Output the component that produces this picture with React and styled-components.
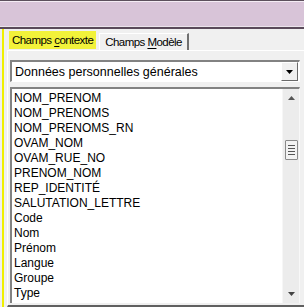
import styled, { createGlobalStyle } from "styled-components";

const Global = createGlobalStyle`
  html, body {
    margin: 0;
    padding: 0;
    background: #f0f0f0;
    overflow: hidden;
  }
  body {
    font-family: "Liberation Sans", Arial, sans-serif;
    font-size: 12px;
    color: #000;
  }
`;

const Window = styled.div`
  width: 304px;
  height: 307px;
  display: flex;
  flex-direction: column;
`;

const TitleBar = styled.div`
  height: 26px;
  flex: none;
  background: #d8c4d8;
  border-top: 1px solid #5c505c;
  box-shadow: inset 0 1px 0 #f4ecf4, inset 0 -1px 0 #ece4ec;
  border-bottom: 2px solid #5a4a5a;
`;

const Body = styled.div`
  flex: 1;
  display: flex;
  min-height: 0;
`;

const Marker = styled.div`
  width: 2px;
  margin-left: 2px;
  background: #f0f000;
  flex: none;
`;

const Pane = styled.div`
  flex: 1;
  display: flex;
  flex-direction: column;
  padding-left: 3px;
  padding-top: 2px;
  min-width: 0;
`;

const TabRow = styled.div`
  display: flex;
  align-items: flex-end;
  height: 19px;
  padding-left: 1px;
  flex: none;
`;

const Tab = styled.div`
  height: ${p => (p.$active ? "18px" : "17px")};
  padding: 0 ${p => (p.$active ? "3px" : "5px")};
  margin-left: ${p => (p.$active ? "1px" : "3px")};
  margin-bottom: ${p => (p.$active ? "1px" : "0")};
  display: flex;
  align-items: center;
  white-space: nowrap;
  font-size: 11.5px;
  letter-spacing: -0.55px;
  background: ${p => (p.$active ? "#f2f23a" : "#f0f0f0")};
  border-left: ${p => (p.$active ? "none" : "1px solid #fff")};
  border-top: ${p => (p.$active ? "none" : "1px solid #fff")};
  border-right: ${p => (p.$active ? "none" : "2px solid #707070")};
  box-sizing: border-box;
  u {
    text-decoration: underline;
    text-underline-offset: 2px;
  }
`;

const Panel = styled.div`
  flex: 1;
  border-top: 1px solid #fff;
  border-left: 1px solid #fff;
  border-bottom: 2px solid #606060;
  display: flex;
  flex-direction: column;
  gap: 5px;
  padding: 9px 0 2px 2px;
  min-height: 0;
`;

const Select = styled.div`
  height: 22px;
  flex: none;
  margin-right: 4px;
  display: flex;
  align-items: center;
  background: #fff;
  box-sizing: border-box;
  border-top: 2px solid #828282;
  border-left: 2px solid #828282;
  border-right: 1px solid #fff;
  border-bottom: 1px solid #fff;
`;

const SelectText = styled.div`
  flex: 1;
  padding-left: 3px;
  font-size: 12.5px;
`;

const DropButton = styled.div`
  width: 15px;
  height: 17px;
  margin-right: 1px;
  background: #f0f0f0;
  border: 1px solid;
  border-color: #fff #6a6a6a #6a6a6a #fff;
  display: flex;
  align-items: center;
  justify-content: center;
`;

const ListBox = styled.div`
  flex: 1;
  margin-right: 4px;
  display: flex;
  background: #fff;
  box-sizing: border-box;
  border-top: 2px solid #828282;
  border-left: 2px solid #828282;
  border-right: 1px solid #f8f8f8;
  min-height: 0;
  overflow: hidden;
`;

const Items = styled.div`
  flex: 1;
  padding: 2px 0 0 2px;
  overflow: hidden;
`;

const Item = styled.div`
  height: 15px;
  line-height: 15px;
  white-space: nowrap;
`;

const ScrollBar = styled.div`
  width: 16px;
  flex: none;
  background: #ececec;
  border-left: 1px solid #f6f6f6;
  display: flex;
  flex-direction: column;
  align-items: center;
`;

const Arrow = styled.div`
  height: 18px;
  display: flex;
  align-items: center;
  justify-content: center;
`;

const Track = styled.div`
  flex: 1;
  width: 100%;
  display: flex;
  flex-direction: column;
  align-items: center;
  padding-top: 33px;
`;

const Thumb = styled.div`
  width: 13px;
  height: 20px;
  box-sizing: border-box;
  background: #f2f2f2;
  border: 1px solid #8a8a8a;
  border-radius: 1px;
  display: flex;
  flex-direction: column;
  justify-content: center;
  align-items: center;
  gap: 2px;
`;

const Grip = styled.div`
  width: 7px;
  height: 1px;
  background: #555;
`;

const items = [
  "NOM_PRENOM",
  "NOM_PRENOMS",
  "NOM_PRENOMS_RN",
  "OVAM_NOM",
  "OVAM_RUE_NO",
  "PRENOM_NOM",
  "REP_IDENTITÉ",
  "SALUTATION_LETTRE",
  "Code",
  "Nom",
  "Prénom",
  "Langue",
  "Groupe",
  "Type",
];

const Triangle = ({ up, color = "#000" }) => (
  <svg width="7" height="4" viewBox="0 0 7 4">
    <path d={up ? "M3.5 0 L7 4 L0 4 Z" : "M0 0 L7 0 L3.5 4 Z"} fill={color} />
  </svg>
);

export default function App() {
  return (
    <Window>
      <Global />
      <TitleBar />
      <Body>
        <Marker />
        <Pane>
          <TabRow>
            <Tab $active>
              Champs&nbsp;<u>c</u>ontexte
            </Tab>
            <Tab>
              Champs&nbsp;<u>M</u>odèle
            </Tab>
          </TabRow>
          <Panel>
            <Select>
              <SelectText>Données personnelles générales</SelectText>
              <DropButton>
                <Triangle />
              </DropButton>
            </Select>
            <ListBox>
              <Items>
                {items.map(it => (
                  <Item key={it}>{it}</Item>
                ))}
              </Items>
              <ScrollBar>
                <Arrow>
                  <Triangle up color="#555" />
                </Arrow>
                <Track>
                  <Thumb>
                    <Grip />
                    <Grip />
                    <Grip />
                    <Grip />
                  </Thumb>
                </Track>
                <Arrow>
                  <Triangle color="#444" />
                </Arrow>
              </ScrollBar>
            </ListBox>
          </Panel>
        </Pane>
      </Body>
    </Window>
  );
}
